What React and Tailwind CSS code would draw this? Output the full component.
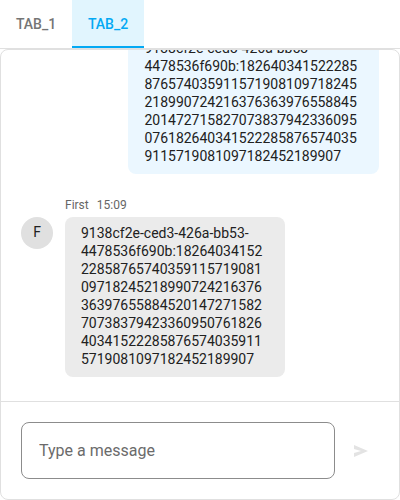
import { useState } from "react";

const TEXT =
  "9138cf2e-ced3-426a-bb53-4478536f690b:1826403415222858765740359115719081097182452189907242163763639765588452014727158270738379423360950761826403415222858765740359115719081097182452189907";

const TABS = ["TAB_1", "TAB_2"];

function Tab({ label, active, onClick }) {
  return (
    <button
      type="button"
      role="tab"
      aria-selected={active}
      onClick={onClick}
      className={`h-12 w-18 border-b-2 pt-0.5 text-sm font-medium ${
        active
          ? "border-[#03a9f4] bg-[#e1f5fe] text-[#03a9f4]"
          : "border-transparent text-[#757575]"
      }`}
    >
      {label}
    </button>
  );
}

function OwnMessage({ text }) {
  return (
    <div className="flex justify-end">
      <p className="max-w-[70%] rounded-lg bg-[#ebf7ff] px-4 pt-[7px] pb-[9px] wrap-break-word">
        {text}
      </p>
    </div>
  );
}

function Message({ author, time, text }) {
  return (
    <div className="flex items-start gap-3">
      <div className="mt-5 flex size-8 shrink-0 items-center justify-center rounded-full bg-[#e0e0e0] pb-0.5">
        {author[0]}
      </div>
      <div className="min-w-0 flex-1">
        <div className="mb-1 flex gap-2 text-xs text-[#666666]">
          <span>{author}</span>
          <time>{time}</time>
        </div>
        <p className="max-w-[70%] rounded-lg bg-[#ebebeb] px-4 pt-[7px] pb-[9px] wrap-break-word">
          {text}
        </p>
      </div>
    </div>
  );
}

export default function App() {
  const [tab, setTab] = useState("TAB_2");
  const [draft, setDraft] = useState("");

  return (
    <div className="flex h-screen flex-col bg-white font-[Roboto,sans-serif] text-[#212121] antialiased">
      <div role="tablist" className="flex shrink-0 border-b border-[#e0e0e0]">
        {TABS.map((name) => (
          <Tab key={name} label={name} active={tab === name} onClick={() => setTab(name)} />
        ))}
      </div>
      <main className="flex min-h-0 flex-1 flex-col overflow-hidden rounded-lg border border-[#e0e0e0]">
        <div className="flex min-h-0 flex-1 flex-col justify-end gap-[23px] overflow-hidden px-5 pb-6 text-sm leading-[18px]">
          <OwnMessage text={TEXT} />
          <Message author="First" time="15:09" text={TEXT} />
        </div>
        <form
          onSubmit={(event) => event.preventDefault()}
          className="flex shrink-0 items-center border-t border-[#e0e0e0] py-5 pr-4 pl-5"
        >
          <input
            type="text"
            aria-label="Type a message"
            placeholder="Type a message"
            value={draft}
            onChange={(event) => setDraft(event.target.value)}
            className="h-[57px] min-w-0 flex-1 rounded-lg border border-[#8c8c8c] px-[17px] text-base outline-none placeholder:text-[#6b6b6b]"
          />
          <button
            type="submit"
            aria-label="Send"
            className="ml-2 flex size-10 items-center justify-center pr-1 text-[#e3e3e3]"
          >
            <svg viewBox="0 0 14 12" className="h-3 w-3.5" fill="currentColor" aria-hidden="true">
              <path d="M0 0 14 6 0 12V8L7 6 0 4Z" />
            </svg>
          </button>
        </form>
      </main>
    </div>
  );
}
